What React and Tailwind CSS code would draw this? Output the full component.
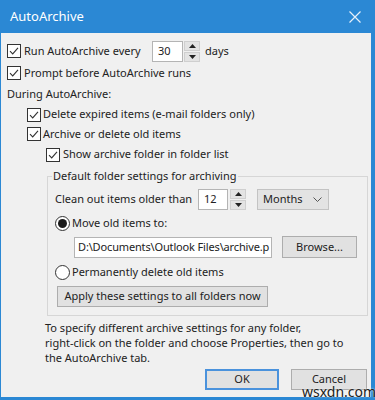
import React from "react";

function Check() {
  return (
    <span className="w-[14px] h-[14px] border border-[#333] bg-white flex items-center justify-center shrink-0">
      <svg width="10" height="10" viewBox="0 0 10 10">
        <path d="M1 5.2 L3.7 7.9 L9 1.8" fill="none" stroke="#333" strokeWidth="1.1" />
      </svg>
    </span>
  );
}

function Radio({ on }) {
  return (
    <span className="w-[15px] h-[15px] rounded-full border border-[#333] bg-white flex items-center justify-center shrink-0">
      {on && <span className="w-[9px] h-[9px] rounded-full bg-[#1a1a1a]" />}
    </span>
  );
}

function SpinButtons() {
  return (
    <div className="w-[16px] h-[21px] flex flex-col gap-[1px] shrink-0">
      <div className="flex-1 bg-[#e3e3e3] border border-[#cfcfcf] flex items-center justify-center">
        <svg width="7" height="4" viewBox="0 0 7 4"><path d="M0 4 L3.5 0 L7 4 Z" fill="#222" /></svg>
      </div>
      <div className="flex-1 bg-[#e3e3e3] border border-[#cfcfcf] flex items-center justify-center">
        <svg width="7" height="4" viewBox="0 0 7 4"><path d="M0 0 L3.5 4 L7 0 Z" fill="#222" /></svg>
      </div>
    </div>
  );
}

export default function App() {
  return (
    <div className="relative w-[375px] h-[400px] bg-[#2b88d4] flex flex-col font-['Noto_Sans',sans-serif] overflow-hidden">
      <div className="h-[33px] shrink-0 flex items-center justify-between pl-[10px] pr-[14px]">
        <span className="text-white text-[13px] leading-none">AutoArchive</span>
        <svg width="12" height="12" viewBox="0 0 12 12">
          <path d="M0.5 0.5 L11.5 11.5 M11.5 0.5 L0.5 11.5" stroke="#e6f0fa" strokeWidth="1.2" />
        </svg>
      </div>
      <div className="ml-[1px] mr-[4px] h-[364px] bg-[#f0f0f0] flex flex-col pt-[7px] text-[11px] text-[#222]">
        <div className="h-[22px] flex items-center pl-[6px]">
          <div className="w-[145px] flex items-center gap-[3px]">
            <Check />
            <span>Run AutoArchive every</span>
          </div>
          <div className="w-[31px] h-[21px] bg-white border border-[#b4b4b4] flex items-center pl-[5px]">30</div>
          <div className="ml-[1px]"><SpinButtons /></div>
          <span className="ml-[5px]">days</span>
        </div>
        <div className="h-[22px] flex items-center gap-[3px] pl-[6px]">
          <Check />
          <span>Prompt before AutoArchive runs</span>
        </div>
        <div className="h-[21px] flex items-center pl-[6px]">During AutoArchive:</div>
        <div className="h-[19px] flex items-center gap-[2px] pl-[26px]">
          <Check />
          <span>Delete expired items (e-mail folders only)</span>
        </div>
        <div className="h-[20px] flex items-center gap-[2px] pl-[26px]">
          <Check />
          <span>Archive or delete old items</span>
        </div>
        <div className="h-[21px] flex items-center gap-[3px] pl-[45px]">
          <Check />
          <span>Show archive folder in folder list</span>
        </div>
        <fieldset className="mt-[3px] ml-[46px] w-[321px] border border-[#d6d6d6] pl-[7px] pb-[8px] flex flex-col">
          <legend className="ml-[-3px] px-[1px] leading-[16px]">Default folder settings for archiving</legend>
          <div className="mt-[4px] h-[22px] flex items-center">
            <span className="w-[143px]">Clean out items older than</span>
            <div className="w-[30px] h-[21px] bg-white border border-[#b4b4b4] flex items-center pl-[5px]">12</div>
            <div className="ml-[2px]"><SpinButtons /></div>
            <div className="ml-[11px] w-[72px] h-[21px] bg-[#e3e3e3] border border-[#c3c3c3] flex items-center justify-between pl-[5px] pr-[6px]">
              <span>Months</span>
              <svg width="9" height="5" viewBox="0 0 9 5"><path d="M0.5 0.5 L4.5 4.5 L8.5 0.5" fill="none" stroke="#555" strokeWidth="1" /></svg>
            </div>
          </div>
          <div className="mt-[3px] h-[20px] flex items-center gap-[2px]">
            <Radio on />
            <span>Move old items to:</span>
          </div>
          <div className="mt-[3px] h-[22px] flex items-center">
            <div className="ml-[19px] w-[198px] h-[21px] bg-white border border-[#b4b4b4] flex items-center pl-[3px] overflow-hidden whitespace-nowrap tracking-[-0.15px]">
              D:\Documents\Outlook Files\archive.p
            </div>
            <div className="ml-[10px] w-[75px] h-[22px] bg-[#e1e1e1] border border-[#adadad] flex items-center justify-center">Browse...</div>
          </div>
          <div className="mt-[4px] h-[20px] flex items-center gap-[2px]">
            <Radio />
            <span>Permanently delete old items</span>
          </div>
          <div className="mt-[4px] ml-[2px] w-[211px] h-[21px] bg-[#e1e1e1] border border-[#adadad] flex items-center justify-center">
            Apply these settings to all folders now
          </div>
        </fieldset>
        <div className="mt-[4px] pl-[44px] leading-[15px]">
          To specify different archive settings for any folder,
          <br />
          right-click on the folder and choose Properties, then go to
          <br />
          the AutoArchive tab.
        </div>
        <div className="mt-[4px] pl-[204px] flex gap-[12px]">
          <div className="w-[74px] h-[21px] bg-[#e1e1e1] border-2 border-[#4a92dc] flex items-center justify-center">OK</div>
          <div className="w-[76px] h-[21px] bg-[#e1e1e1] border border-[#adadad] flex items-start justify-center leading-[18px]">Cancel</div>
        </div>
      </div>
      <div className="absolute left-[302px] top-[384px] text-[14px] leading-[16px] text-[#222] [text-shadow:0_0_2px_white]">wsxdn.com</div>
    </div>
  );
}
